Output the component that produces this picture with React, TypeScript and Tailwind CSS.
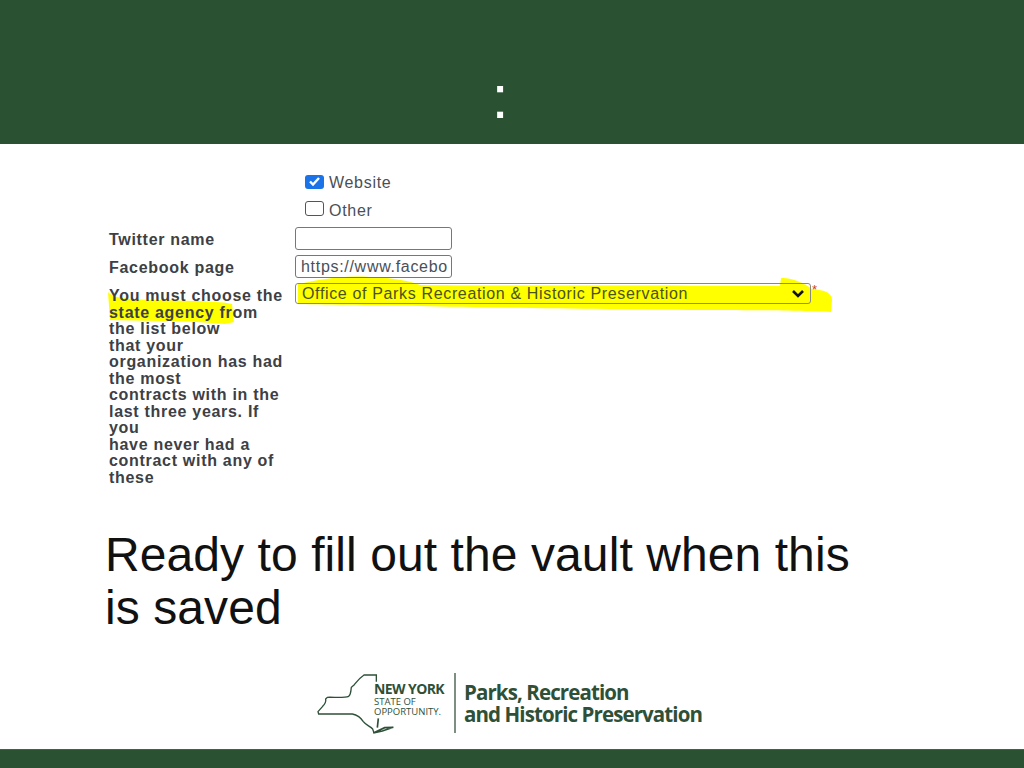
const mono = "font-['Liberation_Sans',Arial,sans-serif]";

function Highlights() {
  return (
    <svg className="absolute left-0 top-0 -z-10 overflow-visible" width="1024" height="768" fill="#ffff00">
      <path d="M108 292 C112 298 130 300 160 300 C190 301 220 301 232 304 L234 322 L225 324 C180 320 140 321 110 320 Z" />
      <path d="M298 284 C320 280 340 275 370 277 C395 278 410 281 420 285 C470 286 600 285 780 286 L781 278 C790 277 805 283 812 289 C825 290 832 293 832 300 L831 312 C800 311 780 310 700 310 C620 309 500 308 420 306 C380 305 330 305 298 304 Z" />
    </svg>
  );
}

function NyLogo() {
  return (
    <svg width="80" height="68" viewBox="0 0 240 204" fill="none" stroke="#2f5038" strokeWidth="4" className="shrink-0">
      <path d="M187 38 L187 18 L150 18 C135 28 128 38 120 48 L112 55 C110 65 112 75 104 82 C90 88 60 84 40 85 L35 90 C37 100 33 105 26 112 L12 128 L14 135 L115 135 C130 138 140 145 148 158 C155 168 170 172 176 180 L180 192" />
      <path d="M193 148 L190 176 M178 192 L212 176 L238 175 L205 186 Z" strokeWidth="5" />
    </svg>
  );
}

export default function App() {
  return (
    <div className={`relative isolate flex h-[768px] w-[1024px] flex-col overflow-hidden bg-white ${mono}`}>
      <header className="flex h-[144px] shrink-0 items-start justify-center bg-[#2a5132]">
        <span className="mr-[24px] mt-[61px] text-[62px] leading-[72px] text-white">:</span>
      </header>

      <main className="relative flex flex-1 flex-col pl-[105px]">
        <div className="flex flex-col pl-[4px] pt-[29px] text-[16px] font-bold leading-[16.5px] tracking-[0.7px] text-[#3d4045]">
          <div className="flex flex-col gap-[10px] pl-[196px] font-normal tracking-[0.7px] text-[#4a4f57]">
            <label className="flex h-[17px] items-center gap-[5px]">
              <span className="flex h-[14px] w-[19px] items-center justify-center rounded-[3px] bg-[#1a73e8]">
                <svg width="13" height="11" viewBox="0 0 13 11" fill="none" stroke="white" strokeWidth="2.4">
                  <path d="M2 5.5 L5 8.5 L11 2" />
                </svg>
              </span>
              <span className="mt-[3px]">Website</span>
            </label>
            <label className="flex h-[17px] items-center gap-[5px]">
              <span className="h-[15px] w-[19px] rounded-[3px] border border-[#555]" />
              <span className="mt-[5px]">Other</span>
            </label>
          </div>

          <div className="mt-[10px] grid grid-cols-[186px_auto] justify-start">
            <span className="flex h-[28px] items-center pb-[2px]">Twitter name</span>
            <span className="h-[23px] w-[157px] rounded-[3px] border border-[#777]" />
            <span className="flex h-[28px] items-center pb-[1px]">Facebook page</span>
            <span className="h-[23px] w-[157px] whitespace-nowrap rounded-[3px] border border-[#777] px-[5px] font-normal leading-[21px] tracking-[0.7px] text-[#4a4f57]">
              https://www.facebo
            </span>
            <div className="pt-[5px]">
              You must choose the
              <br />
              state agency from
              <br />
              the list below
              <br />
              that your
              <br />
              organization has had
              <br />
              the most
              <br />
              contracts with in the
              <br />
              last three years. If
              <br />
              you
              <br />
              have never had a
              <br />
              contract with any of
              <br />
              these
            </div>
            <div className="flex items-start">
              <div className="flex h-[21px] w-[516px] items-center justify-between rounded-[3px] border border-[#888] pl-[6px] pr-[5px] font-normal tracking-[0.65px] text-[#4a5320]">
                <span className="mt-[1px]">Office of Parks Recreation &amp; Historic Preservation</span>
                <svg width="14" height="10" viewBox="0 0 14 10" fill="none" stroke="#111" strokeWidth="2.6">
                  <path d="M2 2 L7 7 L12 2" />
                </svg>
              </div>
              <span className="ml-[1px] text-[13px] font-normal leading-[14px] text-[#d04020]">*</span>
            </div>
          </div>
        </div>

        <p className="mt-[42px] w-[760px] text-[48px] leading-[53px] tracking-[0.08px] text-[#111]">
          Ready to fill out the vault when this is saved
        </p>

        <div className="mt-[35px] flex items-center pl-[209px] text-[#2f5038]">
          <NyLogo />
          <div className="ml-[-20px] mt-[-8px] w-[72px] whitespace-nowrap font-['Open_Sans',sans-serif]">
            <div className="mb-[1px] text-[14px] font-bold leading-[15px] tracking-[-0.6px]">NEW YORK</div>
            <div className="text-[9.5px] leading-[10px]">STATE OF</div>
            <div className="text-[9.5px] leading-[10px]">OPPORTUNITY.</div>
          </div>
          <div className="ml-[8px] h-[60px] w-[2px] bg-[#7d8f82]" />
          <div className="ml-[8px] whitespace-nowrap font-['Open_Sans',sans-serif] text-[20.5px] font-bold leading-[22.5px] tracking-[-0.9px]">
            <div>Parks, Recreation</div>
            <div>and Historic Preservation</div>
          </div>
        </div>
      </main>

      <Highlights />

      <footer className="h-[19px] shrink-0 border-t border-[#3a6060] bg-[#2a5132]" />
    </div>
  );
}
